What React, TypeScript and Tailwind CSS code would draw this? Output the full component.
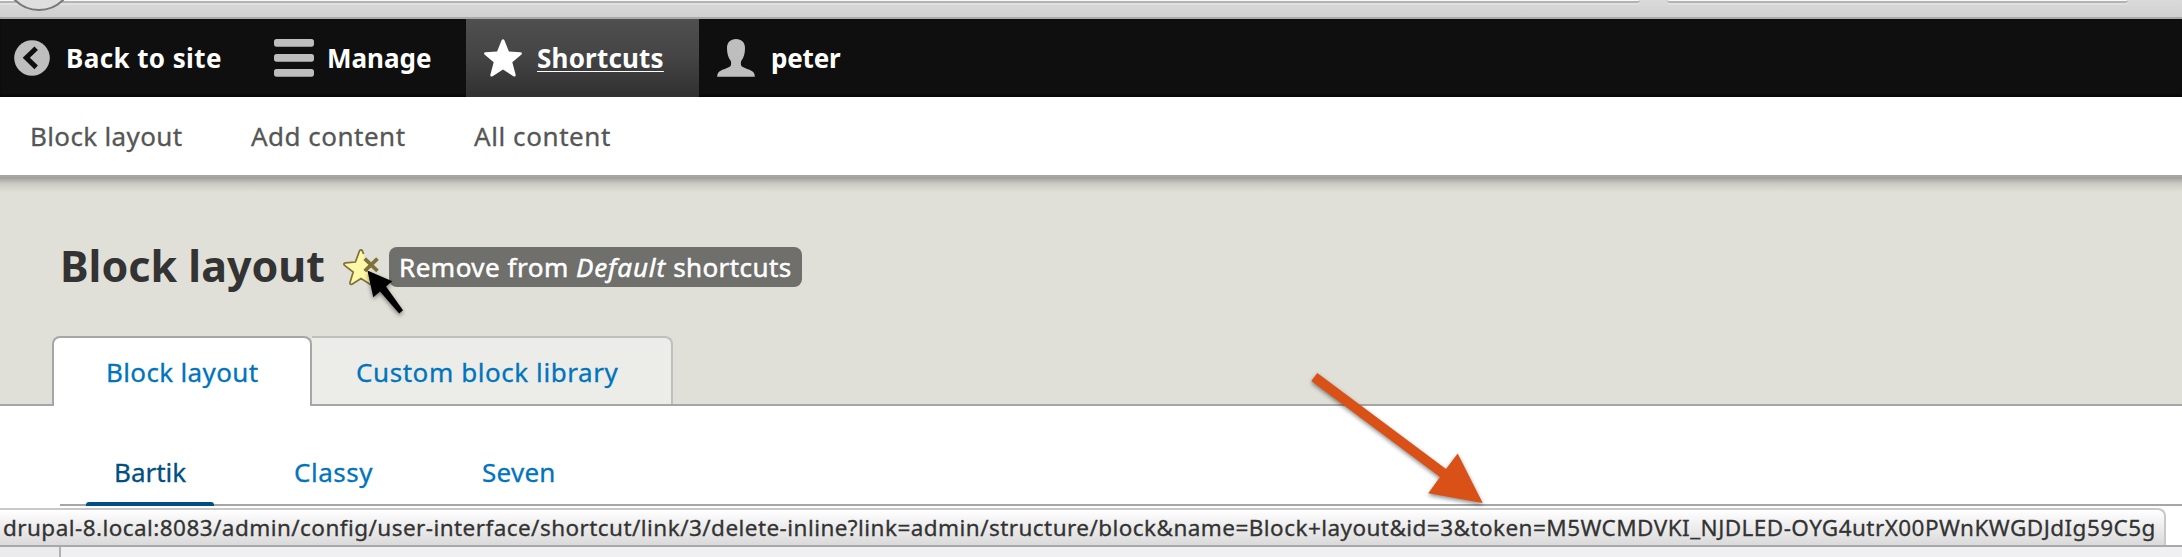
import type { ReactNode } from "react";

function BackIcon() {
  return (
    <svg className="h-9 w-9 shrink-0" viewBox="0 0 36 36">
      <circle cx="18" cy="18" r="17.8" fill="#bebebe" />
      <path d="M22.2 8.2 L12.3 17.8 L22.2 27.4" fill="none" stroke="#0f0f0f" strokeWidth="5" />
    </svg>
  );
}

function MenuIcon() {
  return (
    <svg className="h-[38px] w-10 shrink-0" viewBox="0 0 40 38">
      <g fill="#bebebe">
        <rect x="0" y="0" width="40" height="7.7" rx="2.6" />
        <rect x="0" y="15" width="40" height="7.7" rx="2.6" />
        <rect x="0" y="30" width="40" height="7.7" rx="2.6" />
      </g>
    </svg>
  );
}

function StarIcon() {
  return (
    <svg className="h-[38px] w-[38px] shrink-0" viewBox="0 0 38 38">
      <path
        d="M17.6 1.2 C18.3 -0.2 19.7 -0.2 20.4 1.2 L24.9 12.6 L36.6 13.2 C38.2 13.4 38.4 14.6 37.2 15.7 L28.3 23.3 L31.6 35.5 C31.9 37.4 30.9 38 29.4 37.2 L19 30.6 L8.6 37.2 C7.1 38 6.1 37.4 6.4 35.5 L9.7 23.3 L0.8 15.7 C-0.4 14.6 -0.2 13.4 1.4 13.2 L13.1 12.6 Z"
        fill="#fff"
      />
    </svg>
  );
}

function PersonIcon() {
  return (
    <svg className="h-[38px] w-[38px] shrink-0" viewBox="0 0 38 38">
      <path
        d="M19 0 C24.5 0 28.2 3.4 28 9.5 C27.9 14.5 27 18.5 24.2 22 C23.6 24 23.8 26 24.6 27.2 C27.5 29.5 34.5 30.5 36.6 33.6 C37.5 35 37.8 36 37.8 37.8 L0.2 37.8 C0.2 36 0.5 35 1.4 33.6 C3.5 30.5 10.5 29.5 13.4 27.2 C14.2 26 14.4 24 13.8 22 C11 18.5 10.1 14.5 10 9.5 C9.8 3.4 13.5 0 19 0 Z"
        fill="#bebebe"
      />
    </svg>
  );
}

function RemoveStarIcon() {
  return (
    <svg className="h-[37px] w-[37px] shrink-0" viewBox="0 0 37 37">
      <path
        d="M20.4 4.5 L19.4 1.9 C18.7 0.6 17.3 0.6 16.5 1.9 L12.4 13 L2.5 13.8 C0.7 14 0.4 15 1.6 16.4 L10.2 23 L7 33.4 C6.7 35.2 7.4 35.8 9 35.2 L18 29.6 L27 35.2 C28.6 35.8 29.2 35.2 29 33.4 L26.2 23 L27 20 L25 15 L22 11 Z"
        fill="#fff8a8"
      />
      <path
        d="M20.6 5 L19.4 1.9 C18.7 0.6 17.3 0.6 16.5 1.9 L12.4 13 L2.5 13.8 C0.7 14 0.4 15 1.6 16.4 L10.2 23 L7 33.4 C6.7 35.2 7.4 35.8 9 35.2 L18 29.6 L27 35.2 C28.6 35.8 29.2 35.2 29 33.4 L26.2 23"
        fill="none"
        stroke="#7f7139"
        strokeWidth="1.7"
      />
      <path d="M21.7 9.6 L34.5 22 M34.5 9.6 L21.7 22" stroke="#7f7139" strokeWidth="3.8" />
    </svg>
  );
}

function BrowserEdge() {
  return (
    <div className="relative h-[19px] overflow-hidden border-b-2 border-[#aaaaaa] bg-linear-to-b from-[#dadada] to-[#d0d0d0]">
      <div className="flex">
        <div className="h-[3px] w-[1640px] rounded-br-[5px] border-b-2 border-[#b1b4b1] bg-[#f7f9f7] shadow-[0_2px_0_#e0e0e0]" />
        <div className="ml-[27px] h-[3px] w-[461px] rounded-b-[10px] border-b-2 border-[#b1b4b1] bg-[#f7f9f7] shadow-[0_2px_0_#e0e0e0]" />
      </div>
      <div className="absolute -top-[59px] left-[4px] h-[70px] w-[70px] rounded-full border-2 border-[#777] bg-[#dfdfdf]" />
    </div>
  );
}

function ToolbarItem({ icon, label, className }: { icon: ReactNode; label: ReactNode; className: string }) {
  return (
    <a className={"flex h-full items-center font-bold text-white " + className}>
      {icon}
      {label}
    </a>
  );
}

export default function App() {
  return (
    <div className="relative flex h-[557px] w-[2182px] flex-col overflow-hidden bg-white font-['Noto_Sans','Open_Sans',sans-serif] text-[26px] leading-9 whitespace-nowrap">
      <BrowserEdge />

      <nav className="flex h-[78px] shrink-0 bg-[#0f0f0f] shadow-[inset_0_-2px_2px_#0a070a]">
        <ToolbarItem className="w-[260px] pl-[14px]" icon={<BackIcon />} label={<span className="ml-[16px] tracking-[0.4px]">Back to site</span>} />
        <ToolbarItem className="w-[206px] pl-[14px]" icon={<MenuIcon />} label={<span className="ml-[13px]">Manage</span>} />
        <ToolbarItem
          className="w-[233px] bg-linear-to-b from-[#4f4f4f] via-[#444444] to-[#303030] pl-[18px]"
          icon={<StarIcon />}
          label={<span className="ml-[15px] tracking-[0.2px] underline decoration-1 underline-offset-[3px]">Shortcuts</span>}
        />
        <ToolbarItem className="pl-[18px]" icon={<PersonIcon />} label={<span className="ml-[16px] -tracking-[0.2px]">peter</span>} />
      </nav>

      <nav className="flex h-[78px] shrink-0 items-center bg-white text-[#565656] [-webkit-text-stroke:0.3px]">
        <a className="ml-[30px] w-[221px] tracking-[0.35px]">Block layout</a>
        <a className="w-[223px] tracking-[0.49px]">Add content</a>
        <a className="tracking-[0.58px]">All content</a>
      </nav>

      <header className="flex h-[231px] shrink-0 flex-col border-b-2 border-[#a6a6a6] bg-[#e0e0d8]">
        <div className="h-[2px] bg-[#a6a6a6]" />
        <div className="h-[15px] bg-linear-to-b from-[#9d9d98] via-[#cbcbc4] via-45% to-[#e0e0d8]" />
        <div className="mt-[52px] flex h-[46px] items-center">
          <h1 className="ml-[60px] w-[283px] pb-[2px] text-[43px] leading-[44px] font-bold text-[#333333]">Block layout</h1>
          <RemoveStarIcon />
          <div className="ml-[9px] flex h-10 w-[413px] items-center rounded-lg bg-[#6f6f6b] pl-[10px] text-white">
            <span className="whitespace-pre [-webkit-text-stroke:0.5px]">
              <span className="tracking-[0.5px]">Remove from </span>
              <em className="tracking-[0.9px]">Default</em>
              <span className="tracking-[0.4px]"> shortcuts</span>
            </span>
          </div>
        </div>
        <div className="mt-auto -mb-[2px] ml-[52px] flex items-start text-[#0074bd] [-webkit-text-stroke:0.3px]">
          <a className="relative z-10 flex h-[70px] w-[260px] items-center rounded-t-lg border-2 border-b-0 border-[#a6a6a6] bg-white pl-[52px] tracking-[0.35px]">
            Block layout
          </a>
          <a className="flex h-[68px] w-[361px] items-center rounded-tr-lg border-t-2 border-r-2 border-[#bfbfbf] bg-[#ecede8] pt-[2px] pl-[44px] tracking-[0.57px]">
            Custom block library
          </a>
        </div>
      </header>

      <nav className="ml-[60px] flex h-[100px] shrink-0 border-b-2 border-[#a6a6a6] text-[#0074bd] [-webkit-text-stroke:0.3px]">
        <a className="relative ml-[26px] w-[128px] pt-[48px] pl-[28px] text-[#004f80]">
          Bartik
          <span className="absolute -bottom-[2px] left-0 h-1 w-full rounded-t-[3px] bg-[#004f80]" />
        </a>
        <a className="ml-[80px] w-[188px] pt-[48px] tracking-[0.5px]">Classy</a>
        <a className="pt-[48px] tracking-[0.25px]">Seven</a>
      </nav>

      <footer className="mt-[2px] flex shrink-0 flex-col">
        <div className="h-[37px] w-[2166px] rounded-tr-lg border-t-2 border-r-2 border-[#c8c8c8] bg-linear-to-b from-white to-[#dadada] pl-[3px] text-[22.5px] leading-[35px] tracking-[0.445px] text-[#333] [-webkit-text-stroke:0.3px]">
          drupal-8.local:8083/admin/config/user-interface/shortcut/link/3/delete-inline?link=admin/structure/block&amp;name=Block+layout&amp;id=3&amp;token=M5WCMDVKI_NJDLED-OYG4utrX00PWnKWGDJdIg59C5g
        </div>
        <div className="h-[2px] bg-[#a8a8a8]" />
        <div className="flex h-[10px]">
          <div className="w-[61px] border-r-2 border-[#b0b0b0] bg-[#ebebed]" />
          <div className="flex-1 bg-[#f0f0f2]" />
        </div>
      </footer>

      <svg className="absolute top-[262px] left-[358px] h-[60px] w-[56px] drop-shadow-[0_2px_2px_rgba(0,0,0,0.45)]" viewBox="358 262 56 60">
        <path d="M367.4 270.4 L392.3 281.3 L386 286.6 L403 310.3 L399.2 313.4 L380 291.6 L373.3 297.3 Z" fill="#000" />
      </svg>
      <svg className="absolute top-[360px] left-[1300px] h-[160px] w-[200px] drop-shadow-[0_2px_2px_rgba(0,0,0,0.45)]" viewBox="1300 360 200 160">
        <path d="M1317.3 373 L1446 469 L1457.7 453.5 L1482.7 503 L1428.3 493.3 L1440 477 L1311.3 381 Z" fill="#d95117" />
      </svg>
    </div>
  );
}
